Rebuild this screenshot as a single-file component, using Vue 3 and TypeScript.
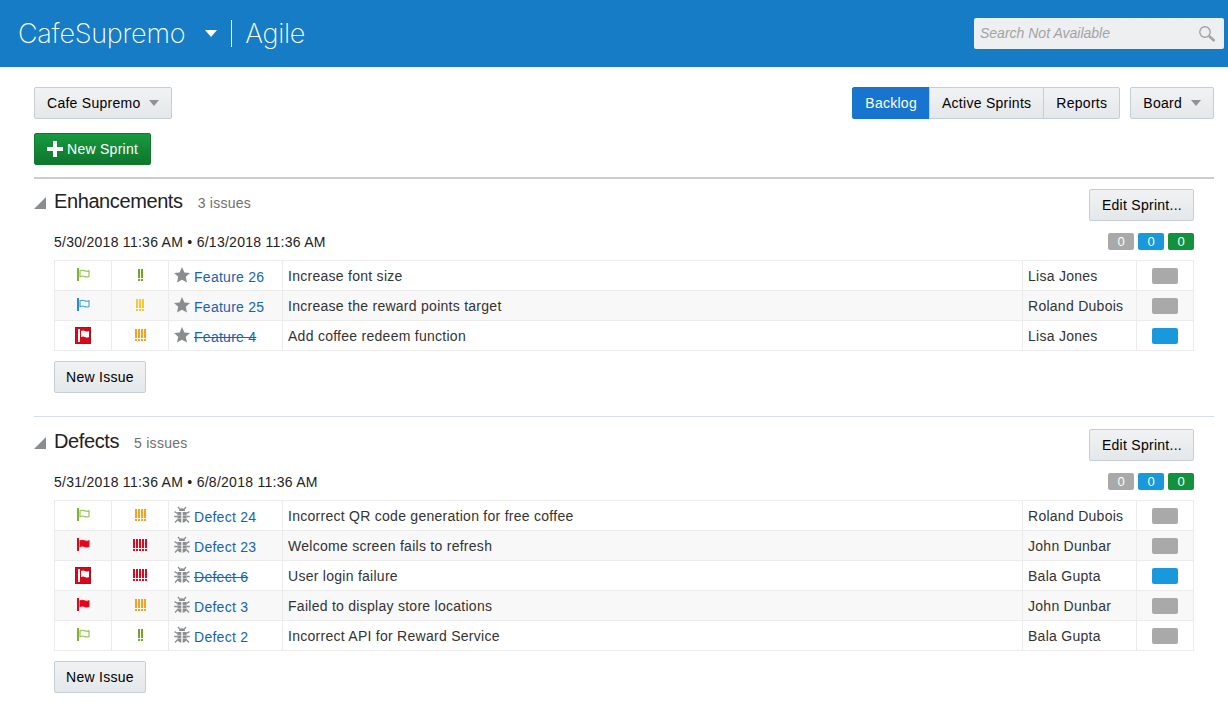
<template>
  <div class="page">
    <header class="topbar">
      <div class="brand">
        <span class="brand-name">CafeSupremo</span>
        <span class="brand-caret"></span>
        <span class="brand-sep"></span>
        <span class="brand-app">Agile</span>
      </div>
      <div class="search">
        <span class="search-text">Search Not Available</span>
        <svg class="search-icon" width="18" height="18" viewBox="0 0 18 18">
          <circle cx="7" cy="7" r="5.2" fill="none" stroke="#a2a2a2" stroke-width="1.4" />
          <path d="M11 11l5.5 5" stroke="#a2a2a2" stroke-width="2.4" fill="none" />
        </svg>
      </div>
    </header>

    <main class="content">
      <div class="toolbar">
        <button class="btn">Cafe Supremo<span class="caret"></span></button>
        <div class="toolbar-right">
          <div class="btn-group">
            <button class="btn active">Backlog</button>
            <button class="btn">Active Sprints</button>
            <button class="btn">Reports</button>
          </div>
          <button class="btn">Board<span class="caret board-caret"></span></button>
        </div>
      </div>

      <button class="btn btn-green">
        <svg width="16" height="16" viewBox="0 0 16 16"><path d="M6 0h4v6h6v4h-6v6H6v-6H0V6h6z" fill="#fff" /></svg>
        New Sprint
      </button>

      <section v-for="(sprint, i) in sprints" :key="sprint.name" class="sprint" :class="{ first: i === 0 }">
        <div class="sprint-head">
          <span class="twisty"></span>
          <h2>{{ sprint.name }}</h2>
          <span class="count">{{ sprint.issues.length }} issues</span>
          <button class="btn edit">Edit Sprint...</button>
        </div>
        <div class="sprint-dates">
          <span>{{ sprint.dates }}</span>
          <div class="badges">
            <span class="badge gray">0</span>
            <span class="badge blue">0</span>
            <span class="badge green">0</span>
          </div>
        </div>

        <table class="issues">
          <colgroup>
            <col style="width: 57px" />
            <col style="width: 57px" />
            <col style="width: 114px" />
            <col style="width: 740px" />
            <col style="width: 114px" />
            <col style="width: 57px" />
          </colgroup>
          <tbody>
            <tr v-for="row in sprint.issues" :key="row.id">
              <td class="center">
                <svg v-if="row.flag === 'box'" class="flag" width="16" height="17" viewBox="0 0 16 17">
                  <rect width="16" height="17" fill="#d9061c" />
                  <rect x="0.5" y="0.5" width="15" height="16" fill="none" stroke="#b0101e" stroke-width="1" />
                  <rect x="3" y="2" width="2" height="13" fill="#fff" />
                  <path d="M6 4q2-1 4 0t4 0v6q-2 1-4 0t-4 0z" fill="#fff" />
                </svg>
                <svg v-else class="flag" width="16" height="15" viewBox="0 0 16 15">
                  <rect x="2" y="0" width="2" height="13" :fill="flagColors[row.flag]" />
                  <path
                    d="M5 2.8q2.25-1 4.5 0t4.5 0v5.7q-2.25 1-4.5 0t-4.5 0z"
                    :fill="row.flag === 'red' ? '#e4051c' : '#fff'"
                    :stroke="flagColors[row.flag]"
                    stroke-width="1.1"
                    stroke-opacity="0.85"
                  />
                </svg>
              </td>
              <td class="center">
                <span class="priority">
                  <span v-for="n in row.bars" :key="n" class="bar" :style="{ color: barColors[row.bars] }"></span>
                </span>
              </td>
              <td class="key">
                <svg v-if="row.type === 'star'" class="type" width="16" height="16" viewBox="0 0 16 16">
                  <path d="M8 0l2.4 5.4 5.6.6-4.2 3.8 1.2 5.8L8 12.7 3 15.6l1.2-5.8L0 6l5.6-.6z" fill="#8a8d90" />
                </svg>
                <svg v-else class="type bug" width="16" height="18" viewBox="0 0 16 18">
                  <g fill="none" stroke="#8a8d90" stroke-width="1.3">
                    <path d="M4 1l2 2.4M12 1l-2 2.4M3.6 7.5L.6 5.6M12.4 7.5l3-1.9M3.4 10.5H.2M12.6 10.5h3.2M3.8 13.5L1 16.5M12.2 13.5l2.8 3" />
                  </g>
                  <path d="M5 5a3 2.8 0 0 1 6 0z" fill="#8a8d90" />
                  <path d="M3.4 6h3.9v10.8C5 16.6 3.4 14.8 3.4 12.5zM8.7 6h3.9v6.5c0 2.3-1.6 4.1-3.9 4.3z" fill="#8a8d90" />
                  <path d="M3.4 9.4h9.2M3.4 12.4h9.2" stroke="#fff" stroke-width="0.8" opacity="0.6" />
                </svg>
                <a :class="{ done: row.done }">{{ row.id }}</a>
              </td>
              <td class="summary">{{ row.summary }}</td>
              <td class="summary">{{ row.assignee }}</td>
              <td class="center">
                <span class="swatch" :class="{ progress: row.done }"></span>
              </td>
            </tr>
          </tbody>
        </table>

        <button class="btn new-issue">New Issue</button>
      </section>
    </main>
  </div>
</template>

<script setup lang="ts">
type Flag = 'low' | 'info' | 'red' | 'box'

interface Issue {
  flag: Flag
  bars: number
  type: 'star' | 'bug'
  id: string
  done?: boolean
  summary: string
  assignee: string
}

const flagColors: Record<string, string> = {
  low: '#7fb32b',
  info: '#1d8fd8',
  red: '#e4051c',
}

const barColors: Record<number, string> = {
  2: '#72a81c',
  3: '#fdc52e',
  4: '#f7a11f',
  5: '#e0061c',
}

const sprints: { name: string; dates: string; issues: Issue[] }[] = [
  {
    name: 'Enhancements',
    dates: '5/30/2018 11:36 AM • 6/13/2018 11:36 AM',
    issues: [
      { flag: 'low', bars: 2, type: 'star', id: 'Feature 26', summary: 'Increase font size', assignee: 'Lisa Jones' },
      { flag: 'info', bars: 3, type: 'star', id: 'Feature 25', summary: 'Increase the reward points target', assignee: 'Roland Dubois' },
      { flag: 'box', bars: 4, type: 'star', id: 'Feature 4', done: true, summary: 'Add coffee redeem function', assignee: 'Lisa Jones' },
    ],
  },
  {
    name: 'Defects',
    dates: '5/31/2018 11:36 AM • 6/8/2018 11:36 AM',
    issues: [
      { flag: 'low', bars: 4, type: 'bug', id: 'Defect 24', summary: 'Incorrect QR code generation for free coffee', assignee: 'Roland Dubois' },
      { flag: 'red', bars: 5, type: 'bug', id: 'Defect 23', summary: 'Welcome screen fails to refresh', assignee: 'John Dunbar' },
      { flag: 'box', bars: 5, type: 'bug', id: 'Defect 6', done: true, summary: 'User login failure', assignee: 'Bala Gupta' },
      { flag: 'red', bars: 4, type: 'bug', id: 'Defect 3', summary: 'Failed to display store locations', assignee: 'John Dunbar' },
      { flag: 'low', bars: 2, type: 'bug', id: 'Defect 2', summary: 'Incorrect API for Reward Service', assignee: 'Bala Gupta' },
    ],
  },
]
</script>

<style>
html,
body {
  margin: 0;
  background: #fff;
}
</style>

<style scoped>
.page {
  font-family: "Liberation Sans", Arial, sans-serif;
  font-size: 14px;
  letter-spacing: 0.27px;
  color: #333;
}

.topbar {
  display: flex;
  align-items: center;
  justify-content: space-between;
  height: 67px;
  padding: 0 4px 0 18px;
  background: #167cc5;
  color: #fff;
}

.brand {
  display: flex;
  align-items: center;
  font-family: Inter, sans-serif;
  font-weight: 200;
  font-size: 27px;
  letter-spacing: -0.25px;
}

.brand-caret {
  width: 0;
  height: 0;
  margin: 0 14px 0 20px;
  border-left: 6px solid transparent;
  border-right: 6px solid transparent;
  border-top: 7px solid #fff;
}

.brand-sep {
  width: 1px;
  height: 27px;
  margin-right: 13px;
  background: #fff;
}

.search {
  display: flex;
  align-items: center;
  justify-content: space-between;
  box-sizing: border-box;
  width: 250px;
  height: 31px;
  padding: 0 8px 0 6px;
  border-radius: 2px;
  background: #eeeff1;
}

.search-text {
  margin-top: -1px;
  font-style: italic;
  letter-spacing: 0;
  color: #a3a3a3;
}

.content {
  padding: 20px 14px 0 34px;
}

.toolbar {
  display: flex;
  justify-content: space-between;
  margin-bottom: 14px;
}

.toolbar-right {
  display: flex;
  gap: 10px;
}

.btn-group {
  display: flex;
}

.btn-group .btn {
  border-radius: 0;
  margin-left: -1px;
}

.btn-group .btn:first-child {
  margin-left: 0;
  border-radius: 2px 0 0 2px;
}

.btn-group .btn:last-child {
  border-radius: 0 2px 2px 0;
}

.btn {
  display: inline-flex;
  align-items: center;
  box-sizing: border-box;
  height: 32px;
  padding: 0 12px;
  border: 1px solid #c4ced7;
  border-radius: 2px;
  background: linear-gradient(#f1f2f3, #e4e8ea);
  color: #000;
  font: inherit;
  letter-spacing: inherit;
}

.btn.active {
  border-color: #1775cf;
  background: #1775cf;
  color: #fff;
}

.btn-green {
  gap: 4px;
  border-color: #0f7a30;
  background: linear-gradient(#189a40, #0e762d);
  color: #fff;
}

.caret {
  width: 0;
  height: 0;
  margin-left: 8px;
  border-left: 5px solid transparent;
  border-right: 5px solid transparent;
  border-top: 6px solid #8f9193;
}

.board-caret {
  margin-left: 9px;
}

.sprint {
  margin-top: 23px;
  padding-top: 12px;
  border-top: 1px solid #d6dfe6;
}

.sprint.first {
  margin-top: 12px;
  padding-top: 10px;
  border-top: 2px solid #cccccc;
}

.sprint-head {
  display: flex;
  align-items: center;
  height: 32px;
  margin-right: 20px;
}

.twisty {
  width: 0;
  height: 0;
  margin: -4px 8px 0 0;
  border-left: 12px solid transparent;
  border-bottom: 12px solid #8a8d90;
}

h2 {
  margin: -8px 15px 0 0;
  font-size: 20px;
  font-weight: 400;
  letter-spacing: -0.4px;
  color: #222;
}

.count {
  margin-top: -4px;
  color: #6f6f6f;
}

.edit {
  margin-left: auto;
  padding-right: 11px;
}

.sprint-dates {
  display: flex;
  align-items: center;
  justify-content: space-between;
  height: 17px;
  margin: 12px 20px 10px 20px;
  color: #222;
}

.badges {
  display: flex;
  gap: 4px;
}

.badge {
  width: 26px;
  height: 17px;
  border-radius: 2px;
  color: #fff;
  font-size: 13px;
  letter-spacing: 0;
  line-height: 17px;
  text-align: center;
}

.gray {
  background: #a9a9a9;
}

.blue {
  background: #1a98dc;
}

.green {
  background: #13913e;
}

.issues {
  table-layout: fixed;
  width: 1139px;
  margin-left: 20px;
  border-collapse: collapse;
}

.issues td {
  height: 30px;
  box-sizing: border-box;
  padding: 0 5px;
  border: 1px solid #ececec;
  color: #333;
  white-space: nowrap;
}

.issues tr:nth-child(even) td {
  background: #f8f8f8;
}

.issues td.center {
  padding: 0;
  text-align: center;
  line-height: 0;
}

.flag {
  vertical-align: middle;
}

.priority {
  display: inline-flex;
  gap: 1px;
  margin-bottom: 2px;
  vertical-align: middle;
}

.bar {
  display: block;
  box-sizing: border-box;
  width: 2px;
  height: 12px;
  border-top: 9px solid currentColor;
  border-bottom: 2px solid currentColor;
}

.key {
  line-height: 18px;
}

.type {
  margin-right: 4px;
  vertical-align: -2px;
}

.type.bug {
  position: relative;
  top: 2px;
  margin-bottom: -1px;
  margin-top: -3px;
  vertical-align: 0;
}

.key a {
  position: relative;
  top: 1px;
  color: #1763b1;
}

.key a.done {
  text-decoration: line-through;
}

.swatch {
  display: inline-block;
  width: 26px;
  height: 16px;
  border-radius: 2px;
  background: #a9a9a9;
  vertical-align: middle;
}

.swatch.progress {
  background: #1a98dc;
}

.new-issue {
  display: flex;
  margin: 10px 0 0 20px;
  padding: 0 11px;
}
</style>
